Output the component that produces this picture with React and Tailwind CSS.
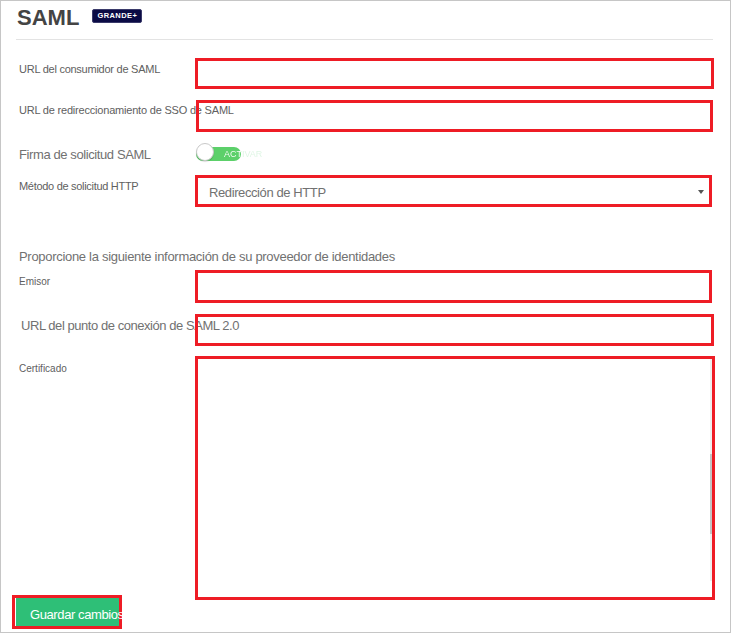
import React from 'react';

const red = 'border-[3px] border-[#ee1c25]';

const Label = ({ children, className = '' }) => (
  <div className={`w-[179px] shrink-0 whitespace-nowrap text-[#606060] ${className}`}>{children}</div>
);

const Toggle = () => (
  <div className="ml-[1px] relative flex items-center h-[18px]">
    <div className="w-[45px] h-[14px] mt-[3px] rounded-full bg-[#5cd06a] flex items-center">
      <span className="ml-[28px] text-[9px] leading-[14px] whitespace-nowrap bg-[linear-gradient(90deg,#ffffff_17px,#dcf5e2_17px)] bg-clip-text text-transparent">
        ACTIVAR
      </span>
    </div>
    <div className="absolute left-0 top-0 w-[18px] h-[18px] rounded-full bg-white border border-[#c9c9c9] shadow-[0_1px_1px_rgba(0,0,0,0.15)]" />
  </div>
);

const App = () => {
  return (
    <div className="w-[731px] h-[633px] border border-[#c6c6c6] bg-white overflow-hidden pl-[15px] font-['Liberation_Sans',Arial,sans-serif]">
      <div className="flex items-start pt-[4px]">
        <h1 className="text-[22px] leading-[25px] font-bold text-[#444444] ml-[1px]">SAML</h1>
        <span className="ml-[13px] mt-[4px] h-[14px] w-[50px] flex items-center justify-center rounded-[2px] bg-[#0b0b45] border border-[#3a3a6a] text-white text-[7.5px] font-bold tracking-[0.4px]">
          GRANDE+
        </span>
      </div>
      <div className="mt-[9px] h-px w-[697px] bg-[#e3e3e3]" />

      <div className="mt-[18px] flex">
        <Label className="pl-[3px] pt-[5px] text-[11px] leading-[13px] tracking-[-0.25px]">URL del consumidor de SAML</Label>
        <div className={`${red} w-[519px] h-[31px]`} />
      </div>

      <div className="mt-[11px] flex">
        <Label className="pl-[3px] pt-[4px] text-[11px] leading-[13px] tracking-[-0.2px]">URL de redireccionamiento de SSO de SAML</Label>
        <div className={`${red} ml-[1px] w-[517px] h-[32px]`} />
      </div>

      <div className="mt-[11px] flex">
        <Label className="pl-[3px] pt-[4px] text-[13px] leading-[15px] tracking-[-0.4px] text-[#717171]">Firma de solicitud SAML</Label>
        <Toggle />
      </div>

      <div className="mt-[13px] flex">
        <Label className="pl-[3px] pt-[5px] text-[11px] leading-[13px] tracking-[-0.3px]">Método de solicitud HTTP</Label>
        <div className={`${red} w-[517px] h-[32px] flex items-start justify-between`}>
          <span className="pl-[11px] pt-[7px] text-[13px] leading-[15px] tracking-[-0.4px] text-[#717171]">Redirección de HTTP</span>
          <span className="mt-[12px] mr-[5px] w-0 h-0 border-x-[3px] border-x-transparent border-t-[4px] border-t-[#555555]" />
        </div>
      </div>

      <p className="mt-[42px] pl-[3px] text-[13px] leading-[15px] tracking-[-0.3px] text-[#717171]">
        Proporcione la siguiente información de su proveedor de identidades
      </p>

      <div className="mt-[6px] flex">
        <Label className="pl-[3px] pt-[6px] text-[10px] leading-[12px]">Emisor</Label>
        <div className={`${red} w-[517px] h-[33px]`} />
      </div>

      <div className="mt-[11px] flex">
        <Label className="pl-[5px] pt-[4px] text-[13px] leading-[15px] tracking-[-0.45px] text-[#717171]">URL del punto de conexión de SAML 2.0</Label>
        <div className={`${red} w-[519px] h-[32px]`} />
      </div>

      <div className="mt-[10px] flex">
        <Label className="pl-[3px] pt-[7px] text-[10px] leading-[12px]">Certificado</Label>
        <div className={`${red} w-[520px] h-[244px] flex justify-end`}>
          <div className="w-[2px] h-[222px] bg-[#eeeeee]">
            <div className="mt-[95px] h-[80px] w-[2px] bg-[#c4c4c4]" />
          </div>
        </div>
      </div>

      <div className={`${red} mt-[-5px] ml-[-4px] w-[110px] h-[34px]`}>
        <button className="w-[104px] h-[28px] border-l border-white bg-[#2ebf77] text-left pl-[14px] pt-[9px] flex items-start">
          <span className="relative z-10 whitespace-nowrap text-white text-[13px] leading-[15px] tracking-[-0.4px]">Guardar cambios</span>
        </button>
      </div>
    </div>
  );
};

export default App;
